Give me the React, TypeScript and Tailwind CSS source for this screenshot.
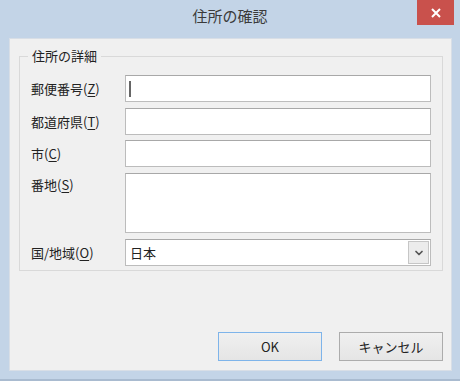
import { ChevronDown } from "lucide-react";

interface Field {
  id: string;
  label: string;
  key: string;
  kind: "input" | "textarea" | "select";
  value?: string;
  focused?: boolean;
  className: string;
}

const fields: Field[] = [
  { id: "zip", label: "郵便番号", key: "Z", kind: "input", focused: true, className: "" },
  { id: "pref", label: "都道府県", key: "T", kind: "input", className: "mt-[6px]" },
  { id: "city", label: "市", key: "C", kind: "input", className: "mt-[5px]" },
  { id: "street", label: "番地", key: "S", kind: "textarea", className: "mt-[6px]" },
  { id: "country", label: "国/地域", key: "O", kind: "select", value: "日本", className: "mt-[6px]" },
];

function FieldRow({ field }: { field: Field }) {
  const isArea = field.kind === "textarea";
  return (
    <div className={`flex ${isArea ? "items-start" : "items-center"} ${field.className}`}>
      <label className={`w-[94px] shrink-0 whitespace-nowrap ${isArea ? "pt-[2px]" : ""}`}>
        {field.label}(<u className="underline-offset-2">{field.key}</u>)
      </label>

      {field.kind === "input" && (
        <div className="flex h-[27px] w-[306px] items-center border border-[#bcbcbc] border-t-[#a8a8a8] bg-white px-[3px]">
          {field.focused && <span className="h-[16px] w-[2px] bg-[#666]" />}
        </div>
      )}

      {field.kind === "textarea" && (
        <div className="h-[60px] w-[306px] border border-[#bcbcbc] border-t-[#a8a8a8] bg-white" />
      )}

      {field.kind === "select" && (
        <div className="flex h-[27px] w-[306px] items-center border border-[#bcbcbc] border-t-[#a8a8a8] bg-white pl-[4px] pr-[1px]">
          <span className="flex-1">{field.value}</span>
          <span className="flex h-[23px] w-[21px] items-center justify-center border border-[#c6c6c6] bg-[#ececec] text-[#555]">
            <ChevronDown size={12} strokeWidth={3.5} />
          </span>
        </div>
      )}
    </div>
  );
}

export default function App() {
  return (
    <div
      className="flex h-[381px] w-[460px] flex-col bg-[#c3d4e7] text-[13px] text-[#222]"
      style={{ fontFamily: '"Noto Sans CJK JP", "Noto Sans", sans-serif' }}
    >
      {/* title bar */}
      <div className="grid h-[38px] shrink-0 grid-cols-[1fr_auto_1fr]">
        <div />
        <div className="pt-[5px] text-[15px] text-[#3a3a3a]">住所の確認</div>
        <div className="flex justify-end pr-[6px]">
          <button
            type="button"
            className="flex h-[25px] w-[37px] items-center justify-center bg-[#c9514c] text-white"
          >
            <svg width="10" height="10" viewBox="0 0 10 10">
              <path d="M1 1 L9 9 M9 1 L1 9" stroke="white" strokeWidth="2" />
            </svg>
          </button>
        </div>
      </div>

      {/* client area */}
      <div className="ml-[9px] mr-[8px] flex h-[333px] flex-col border border-[#d8dee6] bg-[#f0f0f0]">
        <fieldset className="ml-[9px] mr-[8px] mt-[7px] border border-[#d9d9d9] pb-[4px] pl-[11px] pt-[9px]">
          <legend className="-ml-[3px] px-[4px] leading-[20px]">住所の詳細</legend>
          <div className="flex flex-col">
            {fields.map((field) => (
              <FieldRow key={field.id} field={field} />
            ))}
          </div>
        </fieldset>

        {/* buttons */}
        <div className="mt-auto mb-[9px] mr-[8px] flex justify-end gap-[17px]">
          <button
            type="button"
            className="h-[29px] w-[104px] border border-[#7eb4ea] bg-gradient-to-b from-[#f0f0f0] to-[#e5e5e5]"
          >
            OK
          </button>
          <button
            type="button"
            className="h-[29px] w-[104px] border border-[#acacac] bg-gradient-to-b from-[#f0f0f0] to-[#e5e5e5]"
          >
            キャンセル
          </button>
        </div>
      </div>

      <div className="flex-1 border-b-[2px] border-[#a9bbd0]" />
    </div>
  );
}
